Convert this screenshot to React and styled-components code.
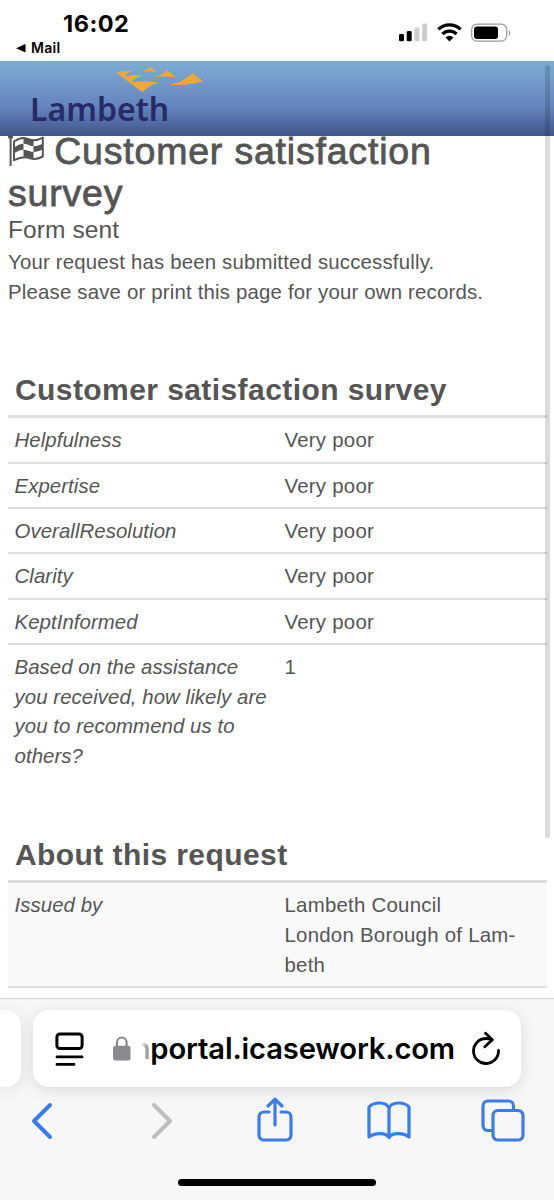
import styled, { createGlobalStyle } from "styled-components";

const answers = [
	{ label: "Helpfulness", value: "Very poor" },
	{ label: "Expertise", value: "Very poor" },
	{ label: "OverallResolution", value: "Very poor" },
	{ label: "Clarity", value: "Very poor" },
	{ label: "KeptInformed", value: "Very poor" },
];

const SignalIcon = () => (
	<svg width="29" height="19" viewBox="0 0 29 19">
		<rect x="0" y="11" width="5" height="7.3" rx="1.4" fill="#000" />
		<rect x="7.7" y="8" width="5" height="10.3" rx="1.4" fill="#000" />
		<rect x="15.4" y="4.4" width="5" height="13.9" rx="1.4" fill="#ccc" />
		<rect x="23.1" y="0.5" width="5" height="17.8" rx="1.4" fill="#ccc" />
	</svg>
);

const WifiIcon = () => (
	<svg width="25" height="19" viewBox="0 0 25 19">
		<g fill="none" stroke="#000" strokeWidth="3.3">
			<path d="M1.4 6.4a15.7 15.7 0 0 1 22.2 0" />
			<path d="M5.4 11a10 10 0 0 1 14.2 0" />
		</g>
		<path d="M8.5 14.4a6 6 0 0 1 8 0L12.5 18.400z" fill="#000" />
	</svg>
);

const BatteryIcon = () => (
	<svg width="41" height="20" viewBox="0 0 41 20">
		<rect
			x="0.7"
			y="1.2"
			width="35"
			height="17"
			rx="5.2"
			fill="none"
			stroke="#999"
			strokeWidth="1.2"
		/>
		<rect x="3" y="3.5" width="24" height="12.4" rx="3" fill="#000" />
		<path d="M37.8 7v6c2-.9 2-5.1 0-6z" fill="#999" />
	</svg>
);

const LogoFlag = () => (
	<svg width="88" height="26" viewBox="116 67 88 26" fill="#eca83a">
		<path d="M116.300 72.700C121 70.500 126 70.300 132.500 71c-4 1.200-6.500 3-7.800 5.600 6-1.900 12-2 19-1.100-5 .8-9 3-12 6.200 9-.9 17-.6 27.500 1-7 1.300-12 4.500-16.500 9.700z" />
		<path d="M140.500 71.700c4.500-1 7-2.700 9.500-5l7 5.200c-5-.7-10-.7-16.500-.2z" />
		<path d="M152.500 77c6-1 10.500-3 14.500-7l9 7.500c-7-1-14-1.200-23.500-.5z" />
		<path d="M170 84.700c9-1.700 16-5.700 22.500-12l10.500 8.600c-9 3-21 4.200-33 3.400z" />
	</svg>
);

// outlined flag with a 3 x 3 checker pattern
const CheckeredFlag = () => (
	<svg width="36" height="32" viewBox="9 134 36 32" fill="#555">
		<circle cx="11.500" cy="136.500" r="2.500" />
		<path d="M10.600 136h2v30h-2z" />
		<path
			d="M15 141.500c8-5 12-3.500 15.500-2s7.500 1.300 13.300-1.800v18.800c-5.500 3-9.500 3-13.300 1.500s-8-1.500-15.500 2.200z"
			fill="none"
			stroke="#555"
			strokeWidth="2"
			strokeLinejoin="round"
		/>
		<path d="M24.500 138c2.500.1 4 .7 6 1.500 1.500.7 2.500.9 4 .9v5.700c-1.500 0-2.500-.2-4-.8-2-.8-3.500-1.300-6-1.500z" />
		<path d="M15 147.500c3.500-2.300 6.500-3.500 9.500-3.700v5.900c-3 .2-6 1.500-9.500 3.500z" />
		<path d="M34.500 146.100c3 0 6-.9 9.300-2.700v5.900c-3.300 1.800-6.300 2.700-9.300 2.700z" />
		<path d="M24.500 149.700c2.500.1 4 .7 6 1.400 1.500.7 2.500.9 4 .9v6.700c-1.500 0-2.500-.2-4-.8-2-.8-3.500-1.300-6-1.500z" />
	</svg>
);

const ReaderIcon = () => (
	<svg width="30" height="36" viewBox="0 0 30 36" stroke="#000" fill="none">
		<rect x="1.900" y="2.900" width="25.200" height="14.700" rx="3" strokeWidth="3" />
		<path
			d="M2 25.900h25M2 33.400h17"
			strokeWidth="2.800"
			strokeLinecap="round"
		/>
	</svg>
);

const LockIcon = () => (
	<svg width="18" height="25" viewBox="0 0 18 25">
		<rect x="0" y="9.700" width="17.500" height="14.800" rx="2.500" fill="#8a8a8e" />
		<path
			d="M4 11V6.500a4.800 5 0 0 1 9.600 0V11"
			fill="none"
			stroke="#8a8a8e"
			strokeWidth="2.200"
		/>
	</svg>
);

const ReloadIcon = () => (
	<svg
		width="30"
		height="36"
		viewBox="0 0 30 36"
		fill="none"
		stroke="#000"
		strokeWidth="2.800"
		strokeLinecap="round"
		strokeLinejoin="round"
	>
		<path d="M27.500 19.500A12.500 12.500 0 1 1 15 7.500q3.500 0 6 1.200" />
		<path d="M14.500 2.300l6.800 6.500-7.500 7" />
	</svg>
);

const ToolbarIcon = ({ width, d, color = "#3a7bf0", stroke = 3.2 }) => (
	<svg
		width={width}
		height="46"
		viewBox={`0 0 ${width} 46`}
		fill="none"
		stroke={color}
		strokeWidth={stroke}
		strokeLinecap="round"
		strokeLinejoin="round"
	>
		<path d={d} />
	</svg>
);

const App = () => {
	return (
		<Screen>
			<GlobalStyle />
			<StatusBar>
				<StatusLeft>
					<Clock>16:02</Clock>
					<BackLink>
						<svg width="10" height="9" viewBox="0 0 10 9">
							<path d="M9.500 0v8.600L0 4.300z" />
						</svg>
						Mail
					</BackLink>
				</StatusLeft>
				<StatusIcons>
					<SignalIcon />
					<WifiIcon />
					<BatteryIcon />
				</StatusIcons>
			</StatusBar>
			<Header>
				<LogoFlag />
				<LogoText>Lambeth</LogoText>
			</Header>
			<Page>
				<Title>
					<CheckeredFlag /> Customer satisfaction
					<br />
					survey
				</Title>
				<Subtitle>Form sent</Subtitle>
				<Message>
					Your request has been submitted successfully.
					<br />
					Please save or print this page for your own records.
				</Message>
				<SectionTitle>Customer satisfaction survey</SectionTitle>
				<Table>
					{answers.map(({ label, value }) => (
						<Row key={label}>
							<Label>{label}</Label>
							<Value>{value}</Value>
						</Row>
					))}
					<Row $last>
						<Label>
							Based on the assistance
							<br />
							you received, how likely are
							<br />
							you to recommend us to
							<br />
							others?
						</Label>
						<Value>1</Value>
					</Row>
				</Table>
				<SectionTitle $second>About this request</SectionTitle>
				<Table>
					<Row $shaded>
						<Label>Issued by</Label>
						<Value>
							Lambeth Council
							<br />
							London Borough of Lam-
							<br />
							beth
						</Value>
					</Row>
				</Table>
			</Page>
			<ScrollThumb />
			<Browser>
				<Tabs>
					<PreviousTab />
					<AddressBar>
						<ReaderIcon />
						<LockIcon />
						<Address>
							<Faded>n</Faded>portal.icasework.com
						</Address>
						<ReloadIcon />
					</AddressBar>
				</Tabs>
				<Toolbar>
					<ToolbarIcon width={22} stroke={4} d="M19 8L3 24l16 16" />
					<ToolbarIcon
						width={22}
						stroke={4}
						color="#bdbdbf"
						d="M3 8l16 16L3 40"
					/>
					<ToolbarIcon
						width={38}
						d="M13 15H8a5 5 0 0 0-5 5v18a5 5 0 0 0 5 5h22a5 5 0 0 0 5-5V20a5 5 0 0 0-5-5h-5M19 28V2.500M12 9l7-6.800L26 9"
					/>
					<ToolbarIcon
						width={46}
						d="M23 11C20 4.500 8 4.500 3 10v30C8 36 20 35 23 40.500V11C26 4.500 38 4.500 43 10v30C38 36 26 35 23 40.500"
					/>
					<ToolbarIcon
						width={44}
						d="M10.500 33.500H7a5 5 0 0 1-5-5V9a5 5 0 0 1 5-5h20.500a5 5 0 0 1 5 5v3M17 13.500h20a5 5 0 0 1 5 5v19.500a5 5 0 0 1-5 5H17a5 5 0 0 1-5-5V18.500a5 5 0 0 1 5-5z"
					/>
				</Toolbar>
				<HomeIndicator />
			</Browser>
		</Screen>
	);
};

const GlobalStyle = createGlobalStyle`
	* {
		box-sizing: border-box;
	}

	body {
		margin: 0;
		background: #fff;
	}

	svg {
		display: block;
		flex-shrink: 0;
	}
`;

const Screen = styled.div`
	position: relative;
	display: flex;
	flex-direction: column;
	width: 554px;
	height: 1200px;
	overflow: hidden;
	color: #555;
	font-family: "Liberation Sans", Arial, sans-serif;
`;

const StatusBar = styled.div`
	display: flex;
	justify-content: space-between;
	height: 61px;
	flex-shrink: 0;
	padding: 10px 42px 0 16px;
	color: #000;
	font-family: Inter, sans-serif;
`;

const StatusLeft = styled.div`
	display: flex;
	flex-direction: column;
`;

const Clock = styled.span`
	margin-left: 47px;
	font-size: 23.5px;
	font-weight: 700;
	letter-spacing: 0.5px;
	line-height: 28px;
`;

const BackLink = styled.span`
	display: flex;
	align-items: center;
	gap: 5px;
	font-size: 14px;
	font-weight: 600;
	letter-spacing: 0.3px;
	line-height: 20px;
`;

const StatusIcons = styled.div`
	display: flex;
	gap: 9px;
	padding-top: 13px;
`;

const Header = styled.header`
	position: relative;
	z-index: 1;
	height: 75px;
	flex-shrink: 0;
	padding: 6px 0 0 30px;
	background: linear-gradient(#7badd4, #6585bf 60%, #415589);

	svg {
		margin-left: 86px;
	}
`;

const LogoText = styled.div`
	margin-top: -3px;
	color: #262b66;
	font-family: "Noto Sans", sans-serif;
	font-size: 32px;
	font-weight: 600;
	line-height: 38px;
`;

const Page = styled.main`
	height: 862px;
	flex-shrink: 0;
	padding: 0 8px;
`;

const Title = styled.h1`
	margin: -5px 0 0;
	font-size: 37.5px;
	font-weight: 400;
	letter-spacing: 0.8px;
	line-height: 41.5px;
	-webkit-text-stroke: 0.8px #555;
	white-space: nowrap;

	svg {
		display: inline-block;
		vertical-align: -2px;
		margin-right: -1px;
	}
`;

const Subtitle = styled.h2`
	margin: 1px 0 0;
	font-size: 24.5px;
	font-weight: 400;
	letter-spacing: 0.1px;
	line-height: 30px;
`;

const Message = styled.p`
	margin: 3px 0 0;
	font-size: 20.4px;
	letter-spacing: 0.18px;
	line-height: 29.7px;
	white-space: nowrap;
`;

const SectionTitle = styled.h3`
	margin: ${(props) => (props.$second ? "59px" : "64px")} 0 0;
	padding-left: 7px;
	font-size: 30px;
	font-weight: 700;
	letter-spacing: 0.42px;
	line-height: 38px;
	white-space: nowrap;
`;

const Table = styled.div`
	width: 539px;
	margin-top: 6px;
	border-top: 3px solid #ddd;
`;

const Row = styled.div`
	display: grid;
	grid-template-columns: 270px 1fr;
	padding: 8px 0 5.6px 6.5px;
	border-bottom: ${(props) => (props.$last ? "none" : "2px solid #ddd")};
	background: ${(props) => (props.$shaded ? "#f9f9f9" : "none")};
	font-size: 20.4px;
	line-height: 29.7px;
	white-space: nowrap;
`;

const Label = styled.div`
	font-style: italic;
	letter-spacing: 0.06px;
`;

const Value = styled.div`
	letter-spacing: 0.25px;
`;

const ScrollThumb = styled.div`
	position: absolute;
	z-index: 2;
	top: 65px;
	right: 4px;
	width: 5px;
	height: 773px;
	border-radius: 3px;
	background: rgba(0, 0, 0, 0.14);
`;

const Browser = styled.footer`
	position: relative;
	z-index: 1;
	flex: 1;
	border-top: 1px solid #d4d4d4;
	background: #f7f7f7;
`;

const Tabs = styled.div`
	display: flex;
	gap: 12px;
	padding-top: 11px;
`;

const PreviousTab = styled.div`
	width: 21px;
	height: 77px;
	border-radius: 0 15px 15px 0;
	background: #fff;
	box-shadow: 0 3px 16px rgba(0, 0, 0, 0.1);
`;

const AddressBar = styled.div`
	display: flex;
	align-items: center;
	width: 488px;
	height: 77px;
	padding-left: 22px;
	border-radius: 16px;
	background: #fff;
	box-shadow: 0 3px 16px rgba(0, 0, 0, 0.12);

	svg:nth-of-type(2) {
		margin-left: 28px;
	}
`;

const Address = styled.div`
	display: flex;
	justify-content: flex-end;
	width: 322px;
	margin: 0 16px 0 2px;
	color: #000;
	font-family: Inter, sans-serif;
	font-size: 29.2px;
	font-weight: 600;
	letter-spacing: -0.15px;
	line-height: 36px;
	white-space: nowrap;
`;

const Faded = styled.span`
	background: linear-gradient(90deg, transparent 45%, #777 100%);
	background-clip: text;
	color: transparent;
`;

const Toolbar = styled.nav`
	display: grid;
	grid-template-columns: 120px 104.5px 110.5px 115px 44px;
	padding: 10px 0 0 31px;
`;

const HomeIndicator = styled.div`
	width: 198px;
	height: 7px;
	margin: 36px auto 0;
	border-radius: 4px;
	background: #000;
`;

export default App;
